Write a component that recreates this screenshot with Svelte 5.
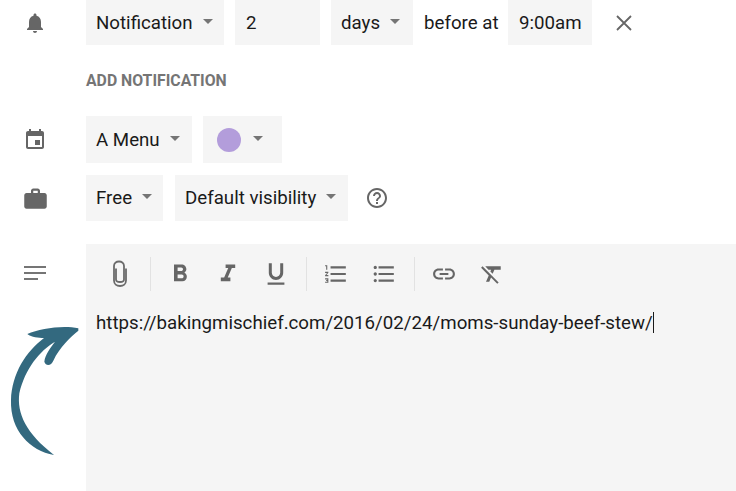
<script>
  const url = 'https://bakingmischief.com/2016/02/24/moms-sunday-beef-stew/';
</script>

<div class="page">
  <div class="row first">
    <div class="side">
      <svg width="24" height="24" viewBox="0 0 24 24"><path d="M12 22c1.100 0 2-.9 2-2h-4c0 1.100.9 2 2 2zm6-6v-5c0-3.100-1.600-5.600-4.500-6.300V4c0-.8-.7-1.500-1.500-1.500s-1.500.7-1.500 1.500v.7C7.600 5.400 6 7.900 6 11v5l-2 2v1h16v-1l-2-2z"/></svg>
    </div>
    <div class="field sel notif">Notification<span class="caret"></span></div>
    <div class="field num">2</div>
    <div class="field sel days">days<span class="caret"></span></div>
    <span class="plain">before at</span>
    <div class="field time">9:00am</div>
    <svg class="close" width="18" height="18" viewBox="0 0 18 18"><path d="M2 2l14 14M16 2L2 16" fill="none" stroke="#666" stroke-width="1.800"/></svg>
  </div>

  <div class="add">ADD NOTIFICATION</div>

  <div class="row second">
    <div class="side">
      <svg width="24" height="24" viewBox="0 0 24 24"><path d="M17 12h-5v5h5v-5zM16 1v2H8V1H6v2H5c-1.100 0-2 .9-2 2v14c0 1.100.9 2 2 2h14c1.100 0 2-.9 2-2V5c0-1.100-.9-2-2-2h-1V1h-2zm3 18H5V8h14v11z"/></svg>
    </div>
    <div class="field sel menu">A Menu<span class="caret"></span></div>
    <div class="field sel colour"><span class="dot"></span><span class="caret"></span></div>
  </div>

  <div class="row third">
    <div class="side">
      <svg width="27" height="27" viewBox="0 0 24 24"><path d="M20 7h-4V5c0-1.100-.9-2-2-2h-4c-1.100 0-2 .9-2 2v2H4c-1.100 0-2 .9-2 2v10c0 1.100.9 2 2 2h16c1.100 0 2-.9 2-2V9c0-1.100-.9-2-2-2zm-6 0h-4V5h4v2z"/></svg>
    </div>
    <div class="field sel free">Free<span class="caret"></span></div>
    <div class="field sel vis">Default visibility<span class="caret"></span></div>
    <svg class="help" width="24" height="24" viewBox="0 0 24 24"><path fill="#666" d="M11 18h2v-2h-2v2zm1-16C6.480 2 2 6.480 2 12s4.480 10 10 10 10-4.480 10-10S17.520 2 12 2zm0 18c-4.410 0-8-3.590-8-8s3.590-8 8-8 8 3.590 8 8-3.590 8-8 8zm0-14c-2.210 0-4 1.790-4 4h2c0-1.100.9-2 2-2s2 .9 2 2c0 2-3 1.750-3 5h2c0-2.250 3-2.500 3-5 0-2.210-1.790-4-4-4z"/></svg>
  </div>

  <div class="row editor-row">
    <div class="side desc">
      <svg width="24" height="24" viewBox="0 0 24 24"><path d="M1 5h22v2H1zM1 11h22v2H1zM1 17h14v2H1z" fill="#757575"/></svg>
    </div>
    <div class="editor">
      <div class="toolbar">
        <svg width="24" height="28" viewBox="0 0 24 28"><path d="M18 9v12c0 3.400-2.700 5.500-6 5.500s-6-2.100-6-5.500V6.500C6 3.800 8.200 2 11 2s5 1.800 5 4.500V20c0 1.500-1.700 2.500-4 2.500s-4-1-4-2.500V9" transform="translate(0 -.5)" fill="none" stroke="#6a6a6a" stroke-width="1.800"/></svg>
        <span class="sep"></span>
        <svg width="24" height="24" viewBox="2 2 20 20"><path fill="#666" d="M15.600 10.800c1-.7 1.700-1.800 1.700-2.800 0-2.300-1.800-4-4-4H7v14h7c2.100 0 3.700-1.700 3.700-3.800 0-1.500-.9-2.800-2.100-3.400zM10 6.500h3c.8 0 1.500.7 1.500 1.500s-.7 1.500-1.500 1.500h-3v-3zm3.500 9H10v-3h3.500c.8 0 1.500.7 1.500 1.500s-.7 1.500-1.500 1.500z"/></svg>
        <svg width="24" height="24" viewBox="2 2 20 20"><path fill="#666" d="M10 4v3h2.200l-3.400 8H6v3h8v-3h-2.200l3.400-8H18V4z"/></svg>
        <svg width="24" height="24" viewBox="2 2 20 20"><path fill="#666" d="M12 17c3.300 0 6-2.700 6-6V3h-2.500v8c0 1.900-1.600 3.500-3.500 3.500S8.500 12.900 8.500 11V3H6v8c0 3.300 2.700 6 6 6zm-7 2v2h14v-2H5z"/></svg>
        <span class="sep"></span>
        <svg width="24" height="24" viewBox="1 1 22 22"><path fill="#666" d="M2 17h2v.5H3v1h1v.5H2v1h3v-4H2v1zm1-9h1V4H2v1h1v3zm-1 3h1.800L2 13.100v.9h3v-1H3.200L5 10.900V10H2v1zm5-6v2h14V5H7zm0 14h14v-2H7v2zm0-6h14v-2H7v2z"/></svg>
        <svg width="24" height="24" viewBox="1 1 22 22"><path fill="#666" d="M4 10.500c-.8 0-1.500.7-1.500 1.500s.7 1.500 1.500 1.500 1.500-.7 1.500-1.500-.7-1.500-1.500-1.500zm0-6c-.8 0-1.500.7-1.500 1.500S3.200 7.500 4 7.500 5.500 6.800 5.500 6 4.800 4.500 4 4.500zm0 12c-.8 0-1.500.7-1.500 1.500s.7 1.500 1.500 1.500 1.500-.7 1.500-1.500-.7-1.500-1.500-1.500zM7 19h14v-2H7v2zm0-6h14v-2H7v2zm0-8v2h14V5H7z"/></svg>
        <span class="sep"></span>
        <svg width="24" height="24" viewBox="1 1 22 22"><path fill="#666" d="M3.900 12c0-1.700 1.400-3.100 3.100-3.100h4V7H7c-2.800 0-5 2.200-5 5s2.200 5 5 5h4v-1.900H7c-1.700 0-3.100-1.400-3.100-3.100zM8 13h8v-2H8v2zm9-6h-4v1.900h4c1.700 0 3.100 1.400 3.100 3.100s-1.400 3.100-3.100 3.100h-4V17h4c2.800 0 5-2.200 5-5s-2.200-5-5-5z"/></svg>
        <svg width="24" height="24" viewBox="1 1 22 22"><path fill="#666" d="M3.300 5L2 6.300l7 7L6.500 19h3l1.600-3.700 5.700 5.700 1.300-1.300L3.300 5zM6 5v.2L8.800 8h2.400l-.7 1.700 2.100 2.100L14.200 8H20V5H6z"/></svg>
      </div>
      <div class="body">{url}<span class="cursor"></span></div>
    </div>
  </div>

  <svg class="arrow" width="100" height="160" viewBox="0 0 300 480">
    <path fill="#33697f" d="M235 62C215 78 178 112 160 152C154 167 138 170 133 155C135 135 150 115 165 95C120 122 75 175 58 250C50 310 78 370 162 435C90 422 30 362 33 270C36 190 78 125 132 84C115 84 95 82 82 72C120 55 190 45 235 55Z"/>
  </svg>
</div>

<style>
  :global(body) {
    margin: 0;
    background: #fff;
  }

  .page {
    position: relative;
    width: 736px;
    height: 491px;
    overflow: hidden;
    font-family: Roboto, "Liberation Sans", sans-serif;
    font-size: 18.7px;
    color: #1a1a1a;
  }

  .row {
    display: flex;
    align-items: stretch;
  }

  .first { height: 45px; gap: 11px; }
  .second { height: 47px; gap: 11px; margin-top: 27px; }
  .third { height: 46px; gap: 12px; margin-top: 12px; }
  .editor-row { height: 247px; margin-top: 23px; }

  .side {
    flex: none;
    width: 70px;
    margin-right: 5px;
    display: flex;
    align-items: center;
    justify-content: center;
    fill: #666;
  }

  .third .side { margin-right: 4px; }

  .side.desc {
    margin-right: 16px;
    align-items: flex-start;
    padding-top: 17px;
  }

  .field {
    flex: none;
    box-sizing: border-box;
    background: #f5f5f5;
    display: flex;
    align-items: center;
    padding-left: 10px;
  }

  .notif { width: 138px; }
  .num { width: 85px; padding-left: 11px; }
  .days { width: 82px; }
  .time { width: 84px; padding-left: 11px; }
  .menu { width: 106px; }
  .colour { width: 79px; padding-left: 14px; }
  .free { width: 77px; }
  .vis { width: 173px; }

  .plain { flex: none; width: 73px; align-self: center; white-space: nowrap; }

  .caret {
    width: 0;
    height: 0;
    margin-left: 10px;
    margin-top: -3px;
    border: 5px solid transparent;
    border-top: 5px solid #757575;
    border-bottom: 0;
  }

  .dot {
    width: 24px;
    height: 24px;
    border-radius: 50%;
    background: #b39ddb;
    margin-right: 2px;
  }

  .close { align-self: center; margin-left: 12px; }
  .help { align-self: center; margin-left: 5px; }

  .add {
    margin: 27px 0 0 86px;
    height: 17px;
    line-height: 17px;
    font-size: 15.8px;
    font-weight: 700;
    color: #757575;
    white-space: nowrap;
  }

  .editor {
    flex: 1;
    background: #f5f5f5;
  }

  .toolbar {
    display: flex;
    align-items: center;
    height: 60px;
    padding-left: 22px;
    gap: 24px;
  }

  .sep {
    width: 1px;
    height: 34px;
    margin: 0 -7px 0 -6px;
    background: #e2e2e2;
  }

  .body {
    padding: 7px 10px;
    line-height: 24px;
    white-space: nowrap;
  }

  .cursor {
    display: inline-block;
    width: 1px;
    height: 21px;
    background: #1a1a1a;
    vertical-align: -4px;
  }

  .arrow {
    position: absolute;
    left: 0;
    top: 310px;
  }
</style>
